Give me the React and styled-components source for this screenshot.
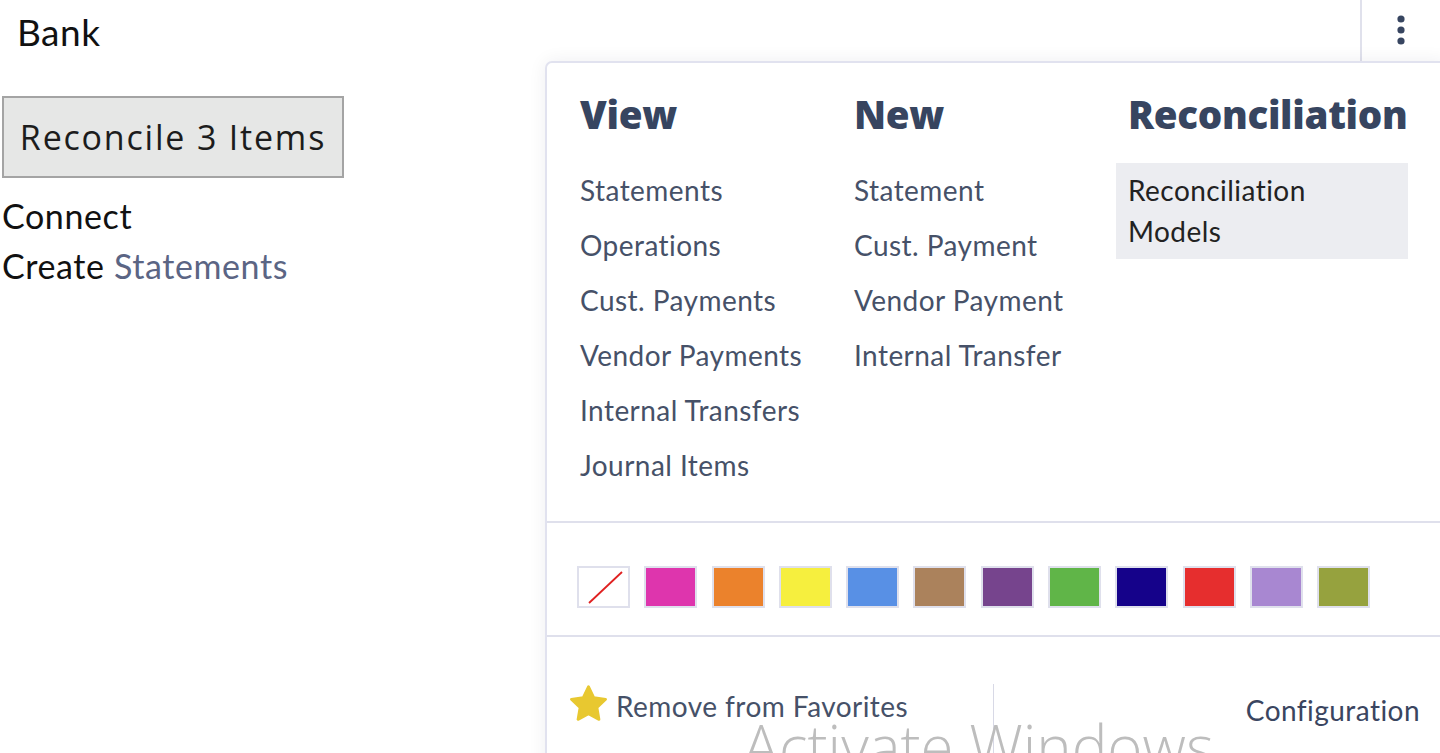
import React from "react";
import styled, { createGlobalStyle } from "styled-components";

const Global = createGlobalStyle`
  html, body { margin: 0; padding: 0; background: #fff; }
  body { width: 1440px; height: 753px; overflow: hidden; font-family: "Lato", "Open Sans", sans-serif; }
  * { box-sizing: border-box; }
`;

const Page = styled.div`
  position: relative;
  width: 1440px;
  height: 753px;
  overflow: hidden;
`;

const TopBar = styled.div`
  display: flex;
  align-items: stretch;
  height: 62px;
`;

const Title = styled.div`
  flex: 1;
  padding: 11px 0 0 17px;
  font-family: "Lato", sans-serif;
  font-size: 37px;
  letter-spacing: 0.5px;
  color: #111;
  line-height: 42px;
`;

const Toggle = styled.div`
  width: 80px;
  border-left: 2px solid #e0e1ec;
  display: flex;
  justify-content: center;
  padding-top: 14px;
`;

const LeftBody = styled.div`
  padding: 34px 0 0 2px;
  display: flex;
  flex-direction: column;
  align-items: flex-start;
`;

const ReconcileButton = styled.button`
  width: 342px;
  height: 82px;
  background: #e6e7e6;
  border: 2px solid #a4a4a4;
  font-family: "Open Sans", sans-serif;
  font-size: 34px;
  letter-spacing: 1.8px;
  color: #1c1c1c;
  padding: 0;
  margin-bottom: 13px;
`;

const LinkLine = styled.div`
  font-family: "Lato", sans-serif;
  font-size: 34px;
  letter-spacing: 0.6px;
  line-height: 50px;
  color: #111;
`;

const Accent = styled.span`
  color: #5b6584;
`;

const Dropdown = styled.div`
  position: absolute;
  left: 545px;
  top: 61px;
  width: 901px;
  height: 720px;
  background: #fff;
  border: 2px solid #e1e2ef;
  border-radius: 7px 0 0 0;
  box-shadow: 0 0 18px rgba(30, 30, 60, 0.07);
`;

const Columns = styled.div`
  display: grid;
  grid-template-columns: 274px 274px 292px;
  padding: 23px 0 28px 21px;
`;

const Column = styled.div`
  display: flex;
  flex-direction: column;
`;

const Heading = styled.div`
  font-family: "Open Sans", sans-serif;
  font-weight: 800;
  font-size: 38.5px;
  letter-spacing: -0.3px;
  line-height: 56px;
  color: #374560;
  padding-left: 12px;
  margin-bottom: 21px;
  white-space: nowrap;
`;

const Item = styled.div`
  font-family: "Lato", sans-serif;
  font-size: 28px;
  letter-spacing: 0.45px;
  line-height: 41px;
  padding: 7px 12px;
  color: ${(p) => (p.$active ? "#222" : "#465168")};
  background: ${(p) => (p.$active ? "#ecedf1" : "transparent")};
  white-space: nowrap;
`;

const Separator = styled.div`
  height: 2px;
  background: #dfe0ec;
`;

const Swatches = styled.div`
  display: flex;
  gap: 14.3px;
  padding: 43px 0 27px 30px;
`;

const Swatch = styled.div`
  position: relative;
  width: 53px;
  height: 42px;
  border: 2px solid #dfe0ec;
  background: ${(p) => p.$color};
  overflow: hidden;
`;

const Bottom = styled.div`
  display: flex;
  padding-top: 47px;
`;

const FavCell = styled.div`
  width: 446px;
  display: flex;
  align-items: center;
  gap: 7px;
  padding-left: 21px;
  height: 44px;
`;

const StarWrap = styled.span`
  display: flex;
  margin-top: -6px;
`;

const FavText = styled.span`
  font-family: "Lato", sans-serif;
  font-size: 28px;
  letter-spacing: 0.45px;
  color: #465168;
`;

const VRule = styled.div`
  width: 1px;
  height: 90px;
  background: #d8d9e6;
`;

const ConfigCell = styled.div`
  flex: 1;
  display: flex;
  justify-content: flex-end;
  padding: 6px 24px 0 0;
  font-family: "Lato", sans-serif;
  font-size: 28px;
  letter-spacing: 0.45px;
  line-height: 41px;
  color: #3a4560;
`;

const Watermark = styled.div`
  position: absolute;
  left: 743px;
  top: 716px;
  font-family: "Open Sans", sans-serif;
  font-weight: 300;
  font-size: 60px;
  line-height: 60px;
  color: #bdbdbd;
  white-space: nowrap;
  pointer-events: none;
`;

const Dots = () => (
  <svg width="10" height="34" viewBox="0 0 10 34">
    <circle cx="5" cy="5" r="3.6" fill="#374560" />
    <circle cx="5" cy="16" r="3.6" fill="#374560" />
    <circle cx="5" cy="27" r="3.6" fill="#374560" />
  </svg>
);

const Star = () => (
  <svg width="41" height="39" viewBox="0 0 24 23">
    <path
      d="M12 1.6l3.1 6.4 7 1-5.1 4.9 1.2 7L12 17.6l-6.2 3.3 1.2-7L1.9 9l7-1z"
      fill="#e8c830"
      stroke="#e8c830"
      strokeWidth="1.6"
      strokeLinejoin="round"
    />
  </svg>
);

const NoColor = () => (
  <svg width="49" height="38" viewBox="0 0 49 38" style={{ display: "block" }}>
    <line x1="10" y1="35" x2="43" y2="4" stroke="#e02020" strokeWidth="1.8" />
  </svg>
);

const colors = [
  null,
  "#de35ad",
  "#eb822c",
  "#f6ef3e",
  "#5890e5",
  "#ab825c",
  "#76448d",
  "#60b548",
  "#15028a",
  "#e62e2e",
  "#a887d1",
  "#96a23e",
];

const view = [
  "Statements",
  "Operations",
  "Cust. Payments",
  "Vendor Payments",
  "Internal Transfers",
  "Journal Items",
];
const create = ["Statement", "Cust. Payment", "Vendor Payment", "Internal Transfer"];

export default function App() {
  return (
    <Page>
      <Global />
      <TopBar>
        <Title>Bank</Title>
        <Toggle>
          <Dots />
        </Toggle>
      </TopBar>
      <LeftBody>
        <ReconcileButton>Reconcile 3 Items</ReconcileButton>
        <LinkLine>Connect</LinkLine>
        <LinkLine>
          Create <Accent>Statements</Accent>
        </LinkLine>
      </LeftBody>

      <Dropdown>
        <Columns>
          <Column>
            <Heading>View</Heading>
            {view.map((t) => (
              <Item key={t}>{t}</Item>
            ))}
          </Column>
          <Column>
            <Heading>New</Heading>
            {create.map((t) => (
              <Item key={t}>{t}</Item>
            ))}
          </Column>
          <Column>
            <Heading>Reconciliation</Heading>
            <Item $active>
              Reconciliation
              <br />
              Models
            </Item>
          </Column>
        </Columns>
        <Separator />
        <Swatches>
          {colors.map((c, i) => (
            <Swatch key={i} $color={c || "#fff"}>
              {c === null && <NoColor />}
            </Swatch>
          ))}
        </Swatches>
        <Separator />
        <Bottom>
          <FavCell>
            <StarWrap>
              <Star />
            </StarWrap>
            <FavText>Remove from Favorites</FavText>
          </FavCell>
          <VRule />
          <ConfigCell>Configuration</ConfigCell>
        </Bottom>
      </Dropdown>
      <Watermark>Activate Windows</Watermark>
    </Page>
  );
}
